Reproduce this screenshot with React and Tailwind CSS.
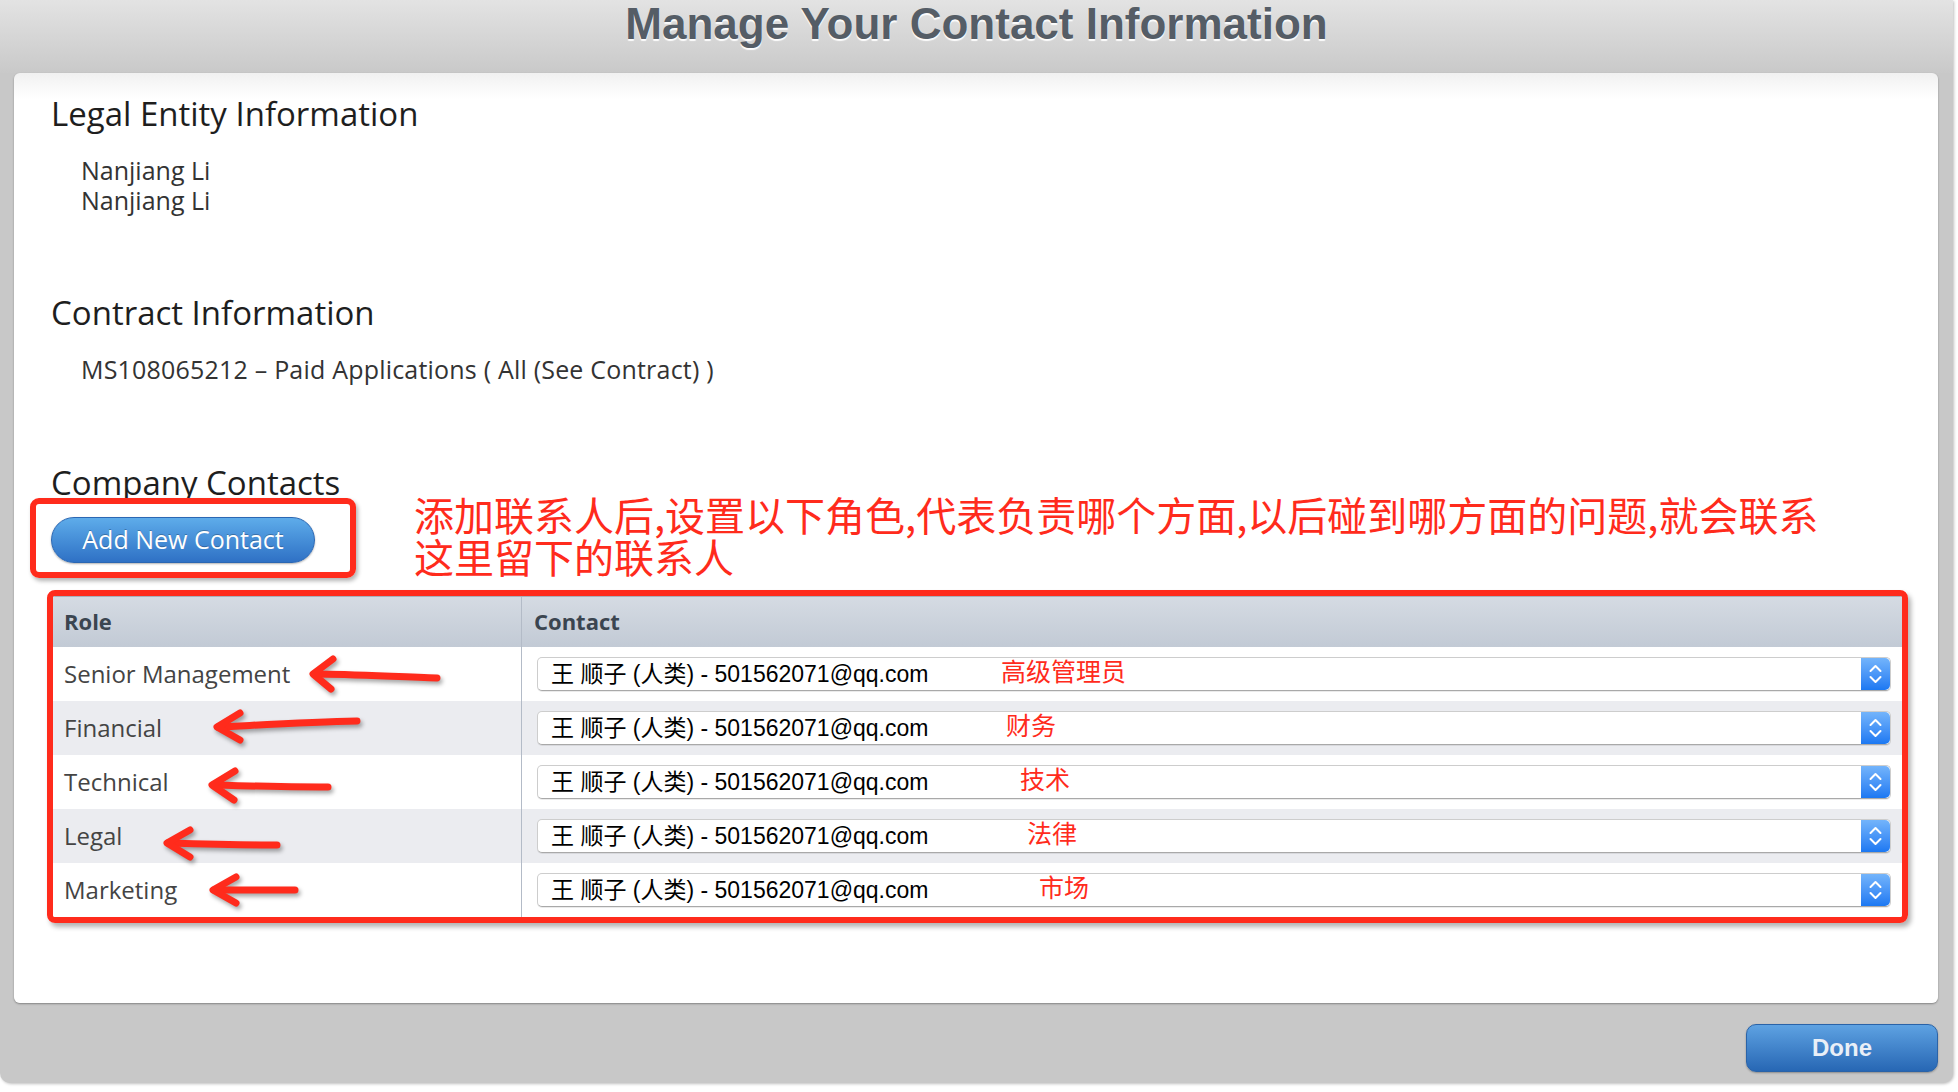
import React from 'react';

const roles = [
  { name: 'Senior Management', note: '高级管理员', noteLeft: 'left-[463px]' },
  { name: 'Financial', note: '财务', noteLeft: 'left-[468px]' },
  { name: 'Technical', note: '技术', noteLeft: 'left-[482px]' },
  { name: 'Legal', note: '法律', noteLeft: 'left-[489px]' },
  { name: 'Marketing', note: '市场', noteLeft: 'left-[501px]' },
];

const body = { fontFamily: '"Open Sans", "Noto Sans", sans-serif' };
const cjk = { fontFamily: '"Liberation Sans", "Noto Sans CJK SC", sans-serif' };

function Stepper() {
  return (
    <div className="w-[29px] h-full rounded-r-[5px] bg-gradient-to-b from-[#73b4fb] to-[#1b78f2] flex items-center justify-center">
      <svg width="29" height="34" viewBox="0 0 29 34" fill="none" stroke="#fff" strokeWidth="2" strokeLinecap="round" strokeLinejoin="round">
        <path d="M9.5 14 L14.5 9 L19.5 14" />
        <path d="M9.5 20 L14.5 25 L19.5 20" />
      </svg>
    </div>
  );
}

function ContactSelect({ note, noteLeft }) {
  return (
    <div className="relative flex h-[34px] items-center rounded-[5px] border border-[#cdcdcd] border-b-[#a9a9a9] bg-white shadow-[0_1px_0_rgba(0,0,0,0.08)]">
      <span className="flex-1 pl-[13px] text-[23px] text-black whitespace-nowrap" style={cjk}>
        王 顺子 (人类) - 501562071@qq.com
      </span>
      <span
        className={`absolute ${noteLeft} top-[-3px] text-[25px] leading-[30px] text-[#ff2b1c]`}
        style={{ fontFamily: '"Noto Sans CJK SC", sans-serif' }}
      >
        {note}
      </span>
      <Stepper />
    </div>
  );
}

function Arrows() {
  const arrows = [
    { shaft: 'M437 678 C400 677 350 674 314 674', head: 'M333 659 L313 674 L331 689' },
    { shaft: 'M357 721 C310 722 260 725 218 727', head: 'M240 713 L217 727 L240 740' },
    { shaft: 'M328 787 C290 787 250 786 213 785', head: 'M235 771 L212 785 L234 800' },
    { shaft: 'M277 845 C240 845 200 844 168 843', head: 'M190 830 L167 843 L190 857' },
    { shaft: 'M295 890 C270 890 240 890 214 890', head: 'M236 877 L213 890 L236 903' },
  ];
  return (
    <svg
      className="absolute left-0 top-0 pointer-events-none"
      width="1958"
      height="1092"
      viewBox="0 0 1958 1092"
      fill="none"
      stroke="#ff2b1c"
      strokeWidth="7"
      strokeLinecap="round"
      strokeLinejoin="round"
      style={{ filter: 'drop-shadow(2px 3px 2px rgba(0,0,0,0.35))' }}
    >
      {arrows.map((a, i) => (
        <g key={i}>
          <path d={a.shaft} />
          <path d={a.head} />
        </g>
      ))}
    </svg>
  );
}

export default function App() {
  return (
    <div className="relative w-[1958px] h-[1092px] bg-white overflow-hidden">
      <div className="w-[1953px] h-[1083px] flex flex-col bg-[#c8c8c8] rounded-b-[10px] shadow-[1px_1px_3px_rgba(0,0,0,0.25)]">
        {/* Header */}
        <div className="h-[73px] bg-gradient-to-b from-[#e3e3e3] to-[#c9c9c9] flex justify-center">
          <h1
            className="mt-[1px] text-[44px] leading-[46px] font-bold text-[#555d66] [text-shadow:0_2px_1px_rgba(255,255,255,0.95)]"
            style={{ fontFamily: '"Liberation Sans", Arial, sans-serif' }}
          >
            Manage Your Contact Information
          </h1>
        </div>

        {/* Card */}
        <div
          className="flex-1 mx-[14px] mr-[15px] rounded-[6px] bg-[linear-gradient(to_bottom,#f1f1f1,#ffffff_26px)] shadow-[0_1px_2px_rgba(0,0,0,0.35)] pl-[37px] pr-[30px] pt-[21px] text-[#222]"
          style={body}
        >
          <h2 className="text-[33px] leading-[40px] text-[#1e1e1e]">Legal Entity Information</h2>
          <div className="mt-[21px] pl-[30px] text-[25px] leading-[30px] text-[#333]">
            <div>Nanjiang Li</div>
            <div>Nanjiang Li</div>
          </div>

          <h2 className="mt-[78px] text-[33px] leading-[40px] text-[#1e1e1e]">Contract Information</h2>
          <div className="mt-[22px] pl-[30px] text-[25px] leading-[29px] text-[#333] tracking-[0.2px]">
            MS108065212 – Paid Applications ( All (See Contract) )
          </div>

          <h2 className="mt-[79px] h-[35px] overflow-hidden text-[33px] leading-[40px] text-[#1e1e1e]">Company Contacts</h2>

          <div className="flex items-start">
            <div className="-ml-[21px] rounded-[9px] border-[6px] border-[#ff2b1c] pl-[15px] pt-[13px] pb-[9px] pr-[35px] shadow-[2px_3px_4px_rgba(0,0,0,0.3)]">
              <button className="h-[46px] w-[264px] rounded-full border border-[#2b67b3] bg-gradient-to-b from-[#5eacea] to-[#2f71c5] text-[25px] text-white shadow-[0_1px_2px_rgba(0,0,0,0.3)] [text-shadow:0_-1px_0_rgba(0,0,0,0.25)]">
                Add New Contact
              </button>
            </div>
            <div
              className="ml-[58px] -mt-[5px] text-[40px] leading-[42px] text-[#ff2b1c] whitespace-nowrap"
              style={{ fontFamily: '"Noto Sans CJK SC", sans-serif' }}
            >
              <div>添加联系人后,设置以下角色,代表负责哪个方面,以后碰到哪方面的问题,就会联系</div>
              <div>这里留下的联系人</div>
            </div>
          </div>

          {/* Roles table */}
          <div className="mt-[12px] -ml-[4px] rounded-[8px] border-[6px] border-[#ff2b1c] shadow-[3px_4px_5px_rgba(0,0,0,0.3)] overflow-hidden">
            <div className="grid grid-cols-[469px_1fr] h-[51px] bg-gradient-to-b from-[#d5dbe3] to-[#c2cad5] border-t border-[#a9b0ba]">
              <div className="pl-[11px] pb-[1px] flex items-center text-[22px] font-bold text-[#3b4550] border-r border-[#b3bbc7]">Role</div>
              <div className="pl-[12px] pb-[1px] flex items-center text-[22px] font-bold text-[#3b4550]">Contact</div>
            </div>
            {roles.map((r, i) => (
              <div
                key={r.name}
                className={`grid grid-cols-[469px_1fr] h-[54px] ${i % 2 === 1 ? 'bg-[#ebecf0]' : 'bg-white'}`}
              >
                <div className="pl-[11px] flex items-center text-[24px] text-[#444] border-r border-[#b3bbc7]">{r.name}</div>
                <div className="pl-[15px] pr-[11px] flex items-center">
                  <div className="flex-1">
                    <ContactSelect note={r.note} noteLeft={r.noteLeft} />
                  </div>
                </div>
              </div>
            ))}
          </div>
        </div>

        {/* Footer */}
        <div className="h-[80px] flex justify-end items-start pt-[21px] pr-[15px]">
          <button
            className="h-[48px] w-[192px] rounded-[10px] border border-[#2a63a8] bg-gradient-to-b from-[#5ea2e2] to-[#2767b4] text-[24px] font-bold text-[#e9eff7] shadow-[0_1px_2px_rgba(0,0,0,0.3)]"
            style={{ fontFamily: '"Liberation Sans", Arial, sans-serif' }}
          >
            Done
          </button>
        </div>
      </div>

      <Arrows />
    </div>
  );
}
